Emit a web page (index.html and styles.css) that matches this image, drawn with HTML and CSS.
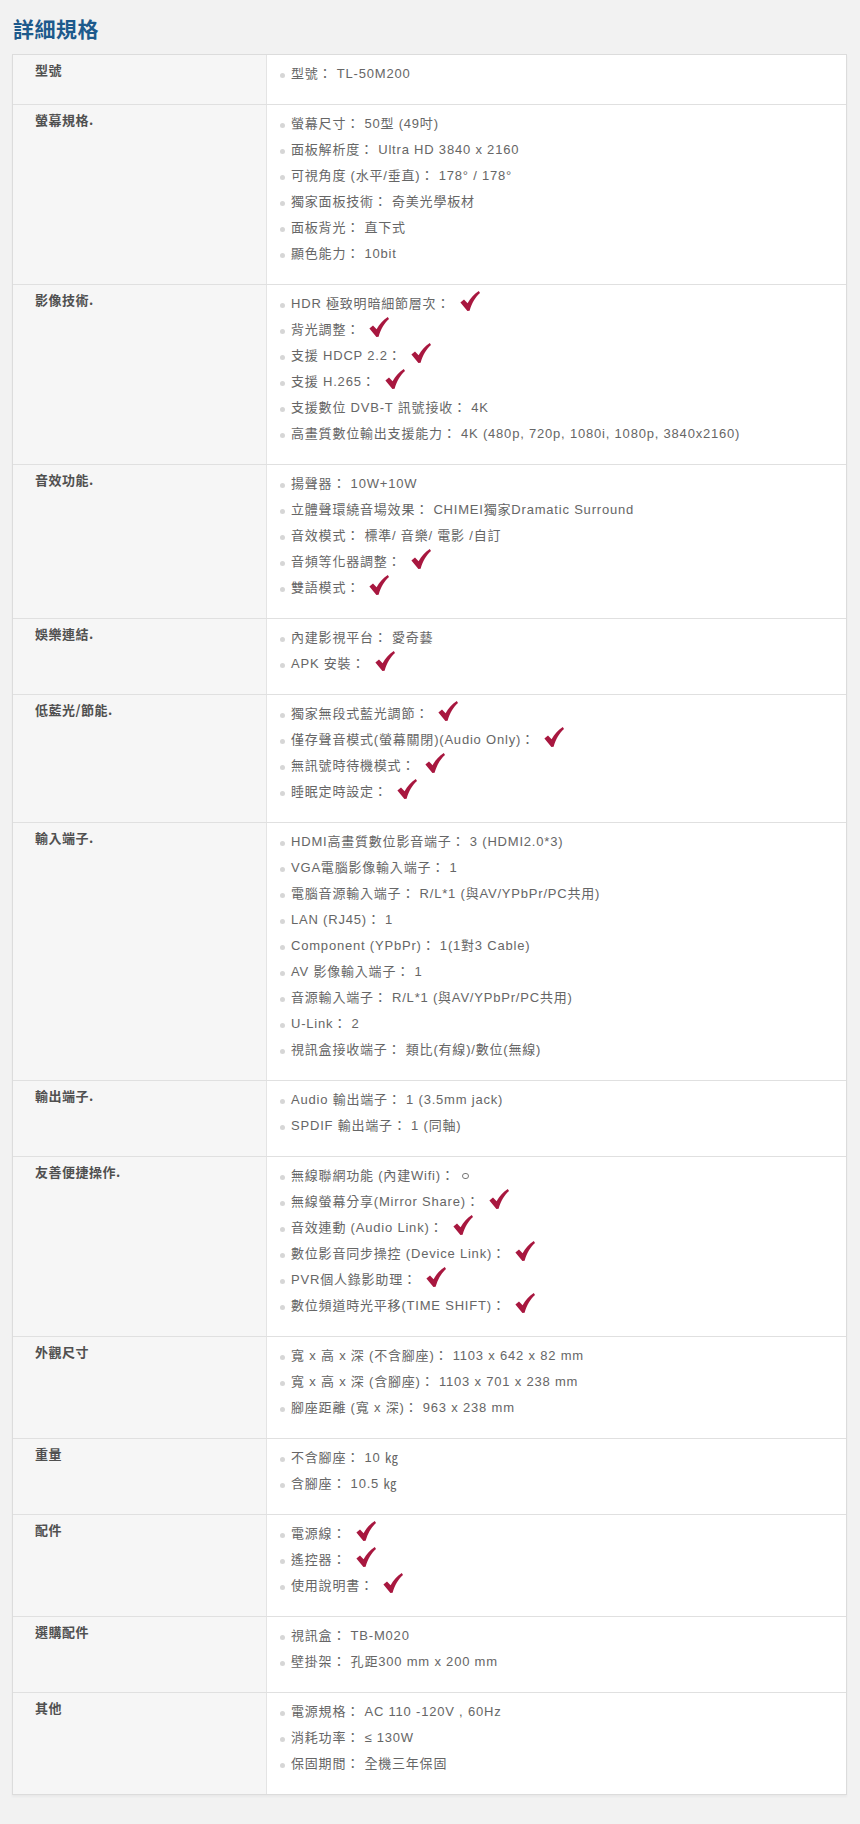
FILE: index.html
```html
<!DOCTYPE html>
<html lang="zh-Hant">
<head>
<meta charset="utf-8">
<title>詳細規格</title>
<link rel="stylesheet" href="styles.css">
</head>
<body>
<svg class="defs" width="0" height="0" aria-hidden="true">
  <defs>
    <symbol id="chk" viewBox="0 0 20 20">
      <path d="M0.4 11.4 L4 8.4 L7.6 12.2 C10.2 7.4 14 3 18.8 0 L20 2 C15.6 5.8 12 11.6 9.6 19.8 L7.4 20 Z"/>
    </symbol>
  </defs>
</svg>
<main class="page">
  <h2 class="title">詳細規格</h2>
  <div class="spec">
    <div class="row">
      <div class="label">型號</div>
      <ul class="vals">
        <li>型號： TL-50M200</li>
      </ul>
    </div>
    <div class="row">
      <div class="label">螢幕規格.</div>
      <ul class="vals">
        <li>螢幕尺寸： 50型 (49吋)</li>
        <li>面板解析度： Ultra HD 3840 x 2160</li>
        <li>可視角度 (水平/垂直)： 178° / 178°</li>
        <li>獨家面板技術： 奇美光學板材</li>
        <li>面板背光： 直下式</li>
        <li>顯色能力： 10bit</li>
      </ul>
    </div>
    <div class="row">
      <div class="label">影像技術.</div>
      <ul class="vals">
        <li>HDR 極致明暗細節層次： <svg class="chk"><use href="#chk"/></svg></li>
        <li>背光調整： <svg class="chk"><use href="#chk"/></svg></li>
        <li>支援 HDCP 2.2： <svg class="chk"><use href="#chk"/></svg></li>
        <li>支援 H.265： <svg class="chk"><use href="#chk"/></svg></li>
        <li>支援數位 DVB-T 訊號接收： 4K</li>
        <li>高畫質數位輸出支援能力： 4K (480p, 720p, 1080i, 1080p, 3840x2160)</li>
      </ul>
    </div>
    <div class="row">
      <div class="label">音效功能.</div>
      <ul class="vals">
        <li>揚聲器： 10W+10W</li>
        <li>立體聲環繞音場效果： CHIMEI獨家Dramatic Surround</li>
        <li>音效模式： 標準/ 音樂/ 電影 /自訂</li>
        <li>音頻等化器調整： <svg class="chk"><use href="#chk"/></svg></li>
        <li>雙語模式： <svg class="chk"><use href="#chk"/></svg></li>
      </ul>
    </div>
    <div class="row">
      <div class="label">娛樂連結.</div>
      <ul class="vals">
        <li>內建影視平台： 愛奇藝</li>
        <li>APK 安裝： <svg class="chk"><use href="#chk"/></svg></li>
      </ul>
    </div>
    <div class="row">
      <div class="label">低藍光/節能.</div>
      <ul class="vals">
        <li>獨家無段式藍光調節： <svg class="chk"><use href="#chk"/></svg></li>
        <li>僅存聲音模式(螢幕關閉)(Audio Only)： <svg class="chk"><use href="#chk"/></svg></li>
        <li>無訊號時待機模式： <svg class="chk"><use href="#chk"/></svg></li>
        <li>睡眠定時設定： <svg class="chk"><use href="#chk"/></svg></li>
      </ul>
    </div>
    <div class="row">
      <div class="label">輸入端子.</div>
      <ul class="vals">
        <li>HDMI高畫質數位影音端子： 3 (HDMI2.0*3)</li>
        <li>VGA電腦影像輸入端子： 1</li>
        <li>電腦音源輸入端子： R/L*1 (與AV/YPbPr/PC共用)</li>
        <li>LAN (RJ45)： 1</li>
        <li>Component (YPbPr)： 1(1對3 Cable)</li>
        <li>AV 影像輸入端子： 1</li>
        <li>音源輸入端子： R/L*1 (與AV/YPbPr/PC共用)</li>
        <li>U-Link： 2</li>
        <li>視訊盒接收端子： 類比(有線)/數位(無線)</li>
      </ul>
    </div>
    <div class="row">
      <div class="label">輸出端子.</div>
      <ul class="vals">
        <li>Audio 輸出端子： 1 (3.5mm jack)</li>
        <li>SPDIF 輸出端子： 1 (同軸)</li>
      </ul>
    </div>
    <div class="row">
      <div class="label">友善便捷操作.</div>
      <ul class="vals">
        <li>無線聯網功能 (內建Wifi)： <span class="dot-o"></span></li>
        <li>無線螢幕分享(Mirror Share)： <svg class="chk"><use href="#chk"/></svg></li>
        <li>音效連動 (Audio Link)： <svg class="chk"><use href="#chk"/></svg></li>
        <li>數位影音同步操控 (Device Link)： <svg class="chk"><use href="#chk"/></svg></li>
        <li>PVR個人錄影助理： <svg class="chk"><use href="#chk"/></svg></li>
        <li>數位頻道時光平移(TIME SHIFT)： <svg class="chk"><use href="#chk"/></svg></li>
      </ul>
    </div>
    <div class="row">
      <div class="label">外觀尺寸</div>
      <ul class="vals">
        <li>寬 x 高 x 深 (不含腳座)： 1103 x 642 x 82 mm</li>
        <li>寬 x 高 x 深 (含腳座)： 1103 x 701 x 238 mm</li>
        <li>腳座距離 (寬 x 深)： 963 x 238 mm</li>
      </ul>
    </div>
    <div class="row">
      <div class="label">重量</div>
      <ul class="vals">
        <li>不含腳座： 10 ㎏</li>
        <li>含腳座： 10.5 ㎏</li>
      </ul>
    </div>
    <div class="row">
      <div class="label">配件</div>
      <ul class="vals">
        <li>電源線： <svg class="chk"><use href="#chk"/></svg></li>
        <li>遙控器： <svg class="chk"><use href="#chk"/></svg></li>
        <li>使用說明書： <svg class="chk"><use href="#chk"/></svg></li>
      </ul>
    </div>
    <div class="row">
      <div class="label">選購配件</div>
      <ul class="vals">
        <li>視訊盒： TB-M020</li>
        <li>壁掛架： 孔距300 mm x 200 mm</li>
      </ul>
    </div>
    <div class="row">
      <div class="label">其他</div>
      <ul class="vals">
        <li>電源規格： AC 110 -120V , 60Hz</li>
        <li>消耗功率： ≤ 130W</li>
        <li>保固期間： 全機三年保固</li>
      </ul>
    </div>
  </div>
</main>
</body>
</html>
```

FILE: styles.css
```css
html, body {
  margin: 0;
  padding: 0;
}

body {
  background: #f2f2f2;
  font-family: "Liberation Sans", "Noto Sans CJK TC", sans-serif;
  color: #666;
}

.defs {
  position: absolute;
  width: 0;
  height: 0;
  overflow: hidden;
}

.page {
  padding: 13px 13px 30px 12px;
}

.title {
  margin: 0 0 11px 1px;
  font-family: "Noto Sans CJK TC", sans-serif;
  font-size: 21px;
  line-height: 30px;
  font-weight: 700;
  color: #1d5a8c;
  letter-spacing: 0.5px;
}

.spec {
  border: 1px solid #dcdcdc;
  background: #fff;
  box-shadow: 0 2px 2px rgba(0, 0, 0, 0.04);
}

.row {
  display: grid;
  grid-template-columns: 254px 1fr;
  border-top: 1px solid #e0e0e0;
}

.row:first-child {
  border-top: 0;
}

.label {
  background: #f6f6f6;
  border-right: 1px solid #e4e4e4;
  padding: 5px 0 0 22px;
  font-family: "Noto Sans CJK TC", sans-serif;
  font-size: 13px;
  line-height: 20px;
  font-weight: 700;
  color: #505050;
  letter-spacing: 0.5px;
}

.vals {
  list-style: none;
  margin: 0;
  padding: 6px 0 17px;
}

.vals li {
  position: relative;
  padding-left: 24px;
  font-size: 13px;
  line-height: 26px;
  height: 26px;
  letter-spacing: 0.8px;
  color: #666;
  white-space: nowrap;
}

.vals li::before {
  content: "";
  position: absolute;
  left: 13px;
  top: 12px;
  width: 5px;
  height: 5px;
  border-radius: 50%;
  background: #d6d6d6;
}

.chk {
  width: 20px;
  height: 20px;
  margin-left: 5px;
  vertical-align: -3px;
  fill: #a8173f;
}

.dot-o {
  display: inline-block;
  width: 5px;
  height: 4px;
  margin-left: 3px;
  border: 1px solid #777;
  border-radius: 3px;
  vertical-align: 1px;
}
```
